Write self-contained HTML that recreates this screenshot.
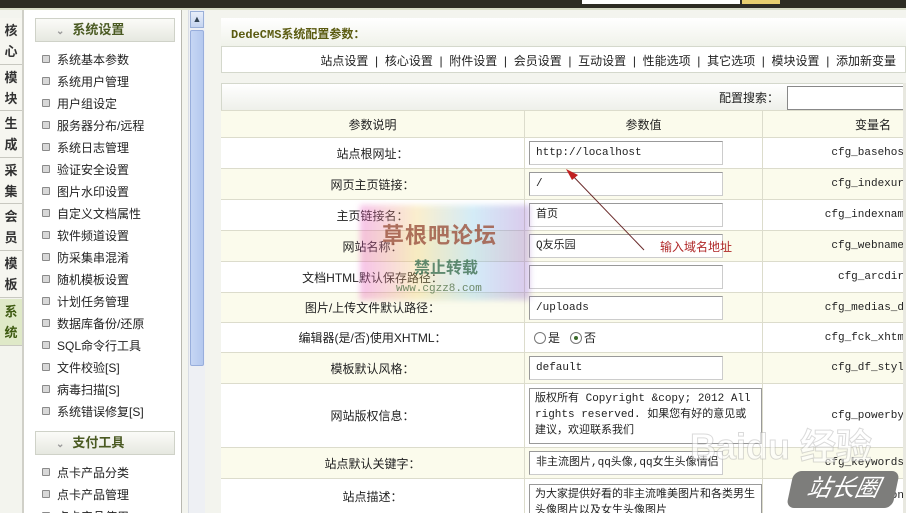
<!DOCTYPE html>
<html><head><meta charset="utf-8"><style>
*{margin:0;padding:0;box-sizing:border-box}
html,body{overflow:hidden}
body{width:906px;height:513px;overflow:hidden;background:#f3f4ee;font-family:"Liberation Sans","Noto Sans CJK SC","WenQuanYi Zen Hei",sans-serif;font-size:12px;color:#222;position:relative}
.a{position:absolute}
.tab{position:absolute;left:0;width:22px;background:#f6f6f0;border-bottom:1px solid #c8c8c0;font-weight:bold;color:#333;font-size:13px;text-align:center;line-height:21px;padding-top:2px}
.menu div.it{position:absolute;left:42px;font-size:12px;color:#222;white-space:nowrap}
.menu div.it:before{content:"";display:inline-block;width:6px;height:6px;border:1px solid #8a8a8a;background:#d8d8d8;margin-right:7px;vertical-align:1px;border-radius:1px}
.hd{position:absolute;left:35px;width:140px;height:24px;border:1px solid #cfd2c8;background:linear-gradient(#fbfbf8,#e6e8e0);color:#4a5a22;font-weight:bold;font-size:13px;line-height:22px;padding-left:20px}
.hd:before{content:"⌄";color:#999;font-size:10px;margin-right:8px}
.row{position:absolute;left:221px;width:685px;border-bottom:1px solid #dcdccc;overflow:hidden}
.c1,.c2,.c3{position:absolute;top:0;height:100%;display:flex;align-items:center}
.c1{left:0;width:303px;justify-content:center;font-size:12px}
.c2{left:303px;width:238px;border-left:1px solid #dcdccc;padding-left:4px}
.c3{left:541px;width:144px;border-left:1px solid #dcdccc;justify-content:flex-end;padding-right:2px;font-family:"Liberation Mono",monospace;font-size:11px;overflow:hidden;white-space:nowrap}
.inp{width:194px;height:24px;border:1px solid #999;border-right-color:#ccc;border-bottom-color:#ccc;background:#fff;font-family:"Liberation Mono","Noto Sans CJK SC",monospace;font-size:11px;line-height:22px;padding-left:6px;white-space:nowrap;overflow:hidden}
.ta{width:236px;border:1px solid #999;background:#fff;font-family:"Liberation Mono","Noto Sans CJK SC",monospace;font-size:11px;line-height:16px;padding:2px 5px;overflow:hidden}
.w{background:#fff}.b{background:#fbfbec}
.rd{display:inline-block;width:12px;height:12px;border:1px solid #777;border-radius:50%;background:#fff;margin-right:2px;vertical-align:-2px;position:relative}
.rd.on:after{content:"";position:absolute;left:3px;top:3px;width:4px;height:4px;border-radius:50%;background:#3a6a2a}
</style></head><body>
<div class="a" style="left:0;top:0;width:906px;height:8px;background:#2d2c24"></div>
<div class="a" style="left:582px;top:0;width:158px;height:4px;background:#fff"></div>
<div class="a" style="left:742px;top:0;width:38px;height:4px;background:#e8cf70"></div>
<div class="a" style="left:0;top:8px;width:906px;height:2px;background:#d8dcc8"></div>

<div class="tab" style="top:18px;height:47px">核<br>心</div>
<div class="tab" style="top:65px;height:46px">模<br>块</div>
<div class="tab" style="top:111px;height:47px">生<br>成</div>
<div class="tab" style="top:158px;height:46px">采<br>集</div>
<div class="tab" style="top:204px;height:47px">会<br>员</div>
<div class="tab" style="top:251px;height:47px">模<br>板</div>
<div class="tab" style="top:299px;height:47px;background:#dfe9c8;color:#3d5a10">系<br>统</div>
<div class="a" style="left:22px;top:10px;width:2px;height:503px;background:#d0d0c8"></div>

<div class="a menu" style="left:24px;top:10px;width:158px;height:503px;background:#fff;border-right:1px solid #b8b8b0"></div>
<div class="menu">
<div class="hd" style="top:18px">系统设置</div>
<div class="it" style="top:51px">系统基本参数</div>
<div class="it" style="top:73px">系统用户管理</div>
<div class="it" style="top:95px">用户组设定</div>
<div class="it" style="top:117px">服务器分布/远程</div>
<div class="it" style="top:139px">系统日志管理</div>
<div class="it" style="top:161px">验证安全设置</div>
<div class="it" style="top:183px">图片水印设置</div>
<div class="it" style="top:205px">自定义文档属性</div>
<div class="it" style="top:227px">软件频道设置</div>
<div class="it" style="top:249px">防采集串混淆</div>
<div class="it" style="top:271px">随机模板设置</div>
<div class="it" style="top:293px">计划任务管理</div>
<div class="it" style="top:315px">数据库备份/还原</div>
<div class="it" style="top:337px">SQL命令行工具</div>
<div class="it" style="top:359px">文件校验[S]</div>
<div class="it" style="top:381px">病毒扫描[S]</div>
<div class="it" style="top:403px">系统错误修复[S]</div>
<div class="hd" style="top:431px">支付工具</div>
<div class="it" style="top:464px">点卡产品分类</div>
<div class="it" style="top:486px">点卡产品管理</div>
<div class="it" style="top:508px">点卡产品使用</div>
</div>

<div class="a" style="left:188px;top:10px;width:17px;height:503px;background:#eef0f4;border-left:1px solid #d8dce4"></div>
<div class="a" style="left:190px;top:11px;width:14px;height:17px;background:linear-gradient(#e8eefa,#c4d4f0);border:1px solid #9ab0d8;color:#345;font-size:9px;text-align:center;line-height:14px">▲</div>
<div class="a" style="left:190px;top:30px;width:14px;height:336px;background:linear-gradient(90deg,#c6d6f4,#b4c8ee);border:1px solid #98aedc;border-radius:2px"></div>

<div class="a" style="left:221px;top:18px;width:685px;height:55px;background:#fff;border:1px solid #d4d8cc"></div>
<div class="a" style="left:221px;top:18px;width:685px;height:29px;background:linear-gradient(#fff,#f0f2ea);border-bottom:1px solid #d4d8cc"></div>
<div class="a" style="left:231px;top:25px;font-weight:bold;color:#5a5a10;font-size:12px;font-family:'Liberation Mono','Noto Sans CJK SC',monospace">DedeCMS系统配置参数：</div>
<div class="a" style="left:300px;top:52px;width:596px;text-align:right;font-size:12px;white-space:nowrap">站点设置 &nbsp;| &nbsp;核心设置 &nbsp;| &nbsp;附件设置 &nbsp;| &nbsp;会员设置 &nbsp;| &nbsp;互动设置 &nbsp;| &nbsp;性能选项 &nbsp;| &nbsp;其它选项 &nbsp;| &nbsp;模块设置 &nbsp;| &nbsp;添加新变量</div>

<div class="a" style="left:221px;top:83px;width:685px;height:28px;background:linear-gradient(#fff,#eef0ea);border:1px solid #d4d8cc"></div>
<div class="a" style="left:719px;top:89px;font-size:12px">配置搜索：</div>
<div class="a" style="left:787px;top:86px;width:125px;height:24px;background:#fff;border:1px solid #888"></div>

<div class="row b" style="top:110px;height:28px;border-top:1px solid #dcdccc"><div class="c1">参数说明</div><div class="c2" style="justify-content:center;padding:0">参数值</div><div class="c3" style="font-family:inherit;font-size:12px;padding-right:15px">变量名</div></div>
<div class="row w" style="top:138px;height:31px"><div class="c1">站点根网址：</div><div class="c2"><div class="inp">http://localhost</div></div><div class="c3">cfg_basehos</div></div>
<div class="row b" style="top:169px;height:31px"><div class="c1">网页主页链接：</div><div class="c2"><div class="inp">/</div></div><div class="c3">cfg_indexur</div></div>
<div class="row w" style="top:200px;height:31px"><div class="c1">主页链接名：</div><div class="c2"><div class="inp">首页</div></div><div class="c3">cfg_indexnam</div></div>
<div class="row b" style="top:231px;height:31px"><div class="c1">网站名称：</div><div class="c2"><div class="inp">Q友乐园</div></div><div class="c3">cfg_webname</div></div>
<div class="row w" style="top:262px;height:31px"><div class="c1">文档HTML默认保存路径：</div><div class="c2"><div class="inp"></div></div><div class="c3">cfg_arcdir</div></div>
<div class="row b" style="top:293px;height:30px"><div class="c1">图片/上传文件默认路径：</div><div class="c2"><div class="inp">/uploads</div></div><div class="c3">cfg_medias_d</div></div>
<div class="row w" style="top:323px;height:30px"><div class="c1">编辑器(是/否)使用XHTML：</div><div class="c2" style="padding-left:9px;font-size:12px"><span class="rd"></span>是&nbsp;&nbsp;&nbsp;<span class="rd on"></span>否</div><div class="c3">cfg_fck_xhtm</div></div>
<div class="row b" style="top:353px;height:31px"><div class="c1">模板默认风格：</div><div class="c2"><div class="inp">default</div></div><div class="c3">cfg_df_styl</div></div>
<div class="row w" style="top:384px;height:64px"><div class="c1">网站版权信息：</div><div class="c2"><div class="ta" style="height:56px">版权所有 Copyright &amp;copy; 2012 All rights reserved. 如果您有好的意见或建议，欢迎联系我们</div></div><div class="c3">cfg_powerby</div></div>
<div class="row b" style="top:448px;height:31px"><div class="c1">站点默认关键字：</div><div class="c2"><div class="inp">非主流图片,qq头像,qq女生头像情侣</div></div><div class="c3">cfg_keywords</div></div>
<div class="row w" style="top:479px;height:34px;border-bottom:none"><div class="c1">站点描述：</div><div class="c2" style="align-items:flex-start;padding-top:5px"><div class="ta" style="height:40px">为大家提供好看的非主流唯美图片和各类男生头像图片以及女生头像图片</div></div><div class="c3">cfg_description</div></div>

<div class="a" style="left:903px;top:83px;width:3px;height:430px;background:#e8e8e0"></div>

<div class="a" style="left:360px;top:205px;width:170px;height:95px;background:linear-gradient(90deg,rgba(230,80,190,.35),rgba(240,200,90,.3),rgba(110,190,230,.3),rgba(150,100,200,.35));filter:blur(3px)"></div>
<div class="a" style="left:382px;top:218px;font-size:22px;font-weight:bold;color:rgba(160,90,70,.85);letter-spacing:1px">草根吧论坛</div>
<div class="a" style="left:414px;top:254px;font-size:16px;font-weight:bold;color:rgba(70,120,90,.85)">禁止转载</div>
<div class="a" style="left:396px;top:283px;font-size:11px;color:rgba(90,120,80,.85);font-family:'Liberation Mono',monospace">www.cgzz8.com</div>

<svg class="a" style="left:0;top:0" width="906" height="513"><line x1="644" y1="250" x2="570" y2="173" stroke="#6a2a2a" stroke-width="1"/><polygon points="566,169 578,175 572,180" fill="#c02020"/></svg>
<div class="a" style="left:660px;top:238px;color:#b02828;font-size:12px">输入域名地址</div>

<div class="a" style="left:690px;top:418px;font-size:36px;font-weight:bold;color:rgba(255,255,255,.55);-webkit-text-stroke:1px rgba(150,150,150,.35)">Baidu 经验</div>
<div class="a" style="left:790px;top:471px;width:106px;height:37px;background:#7d7d7b;border-radius:8px;transform:skewX(-12deg);color:#fff;font-size:24px;font-style:italic;text-align:center;line-height:36px">站长圈</div>
</body></html>
